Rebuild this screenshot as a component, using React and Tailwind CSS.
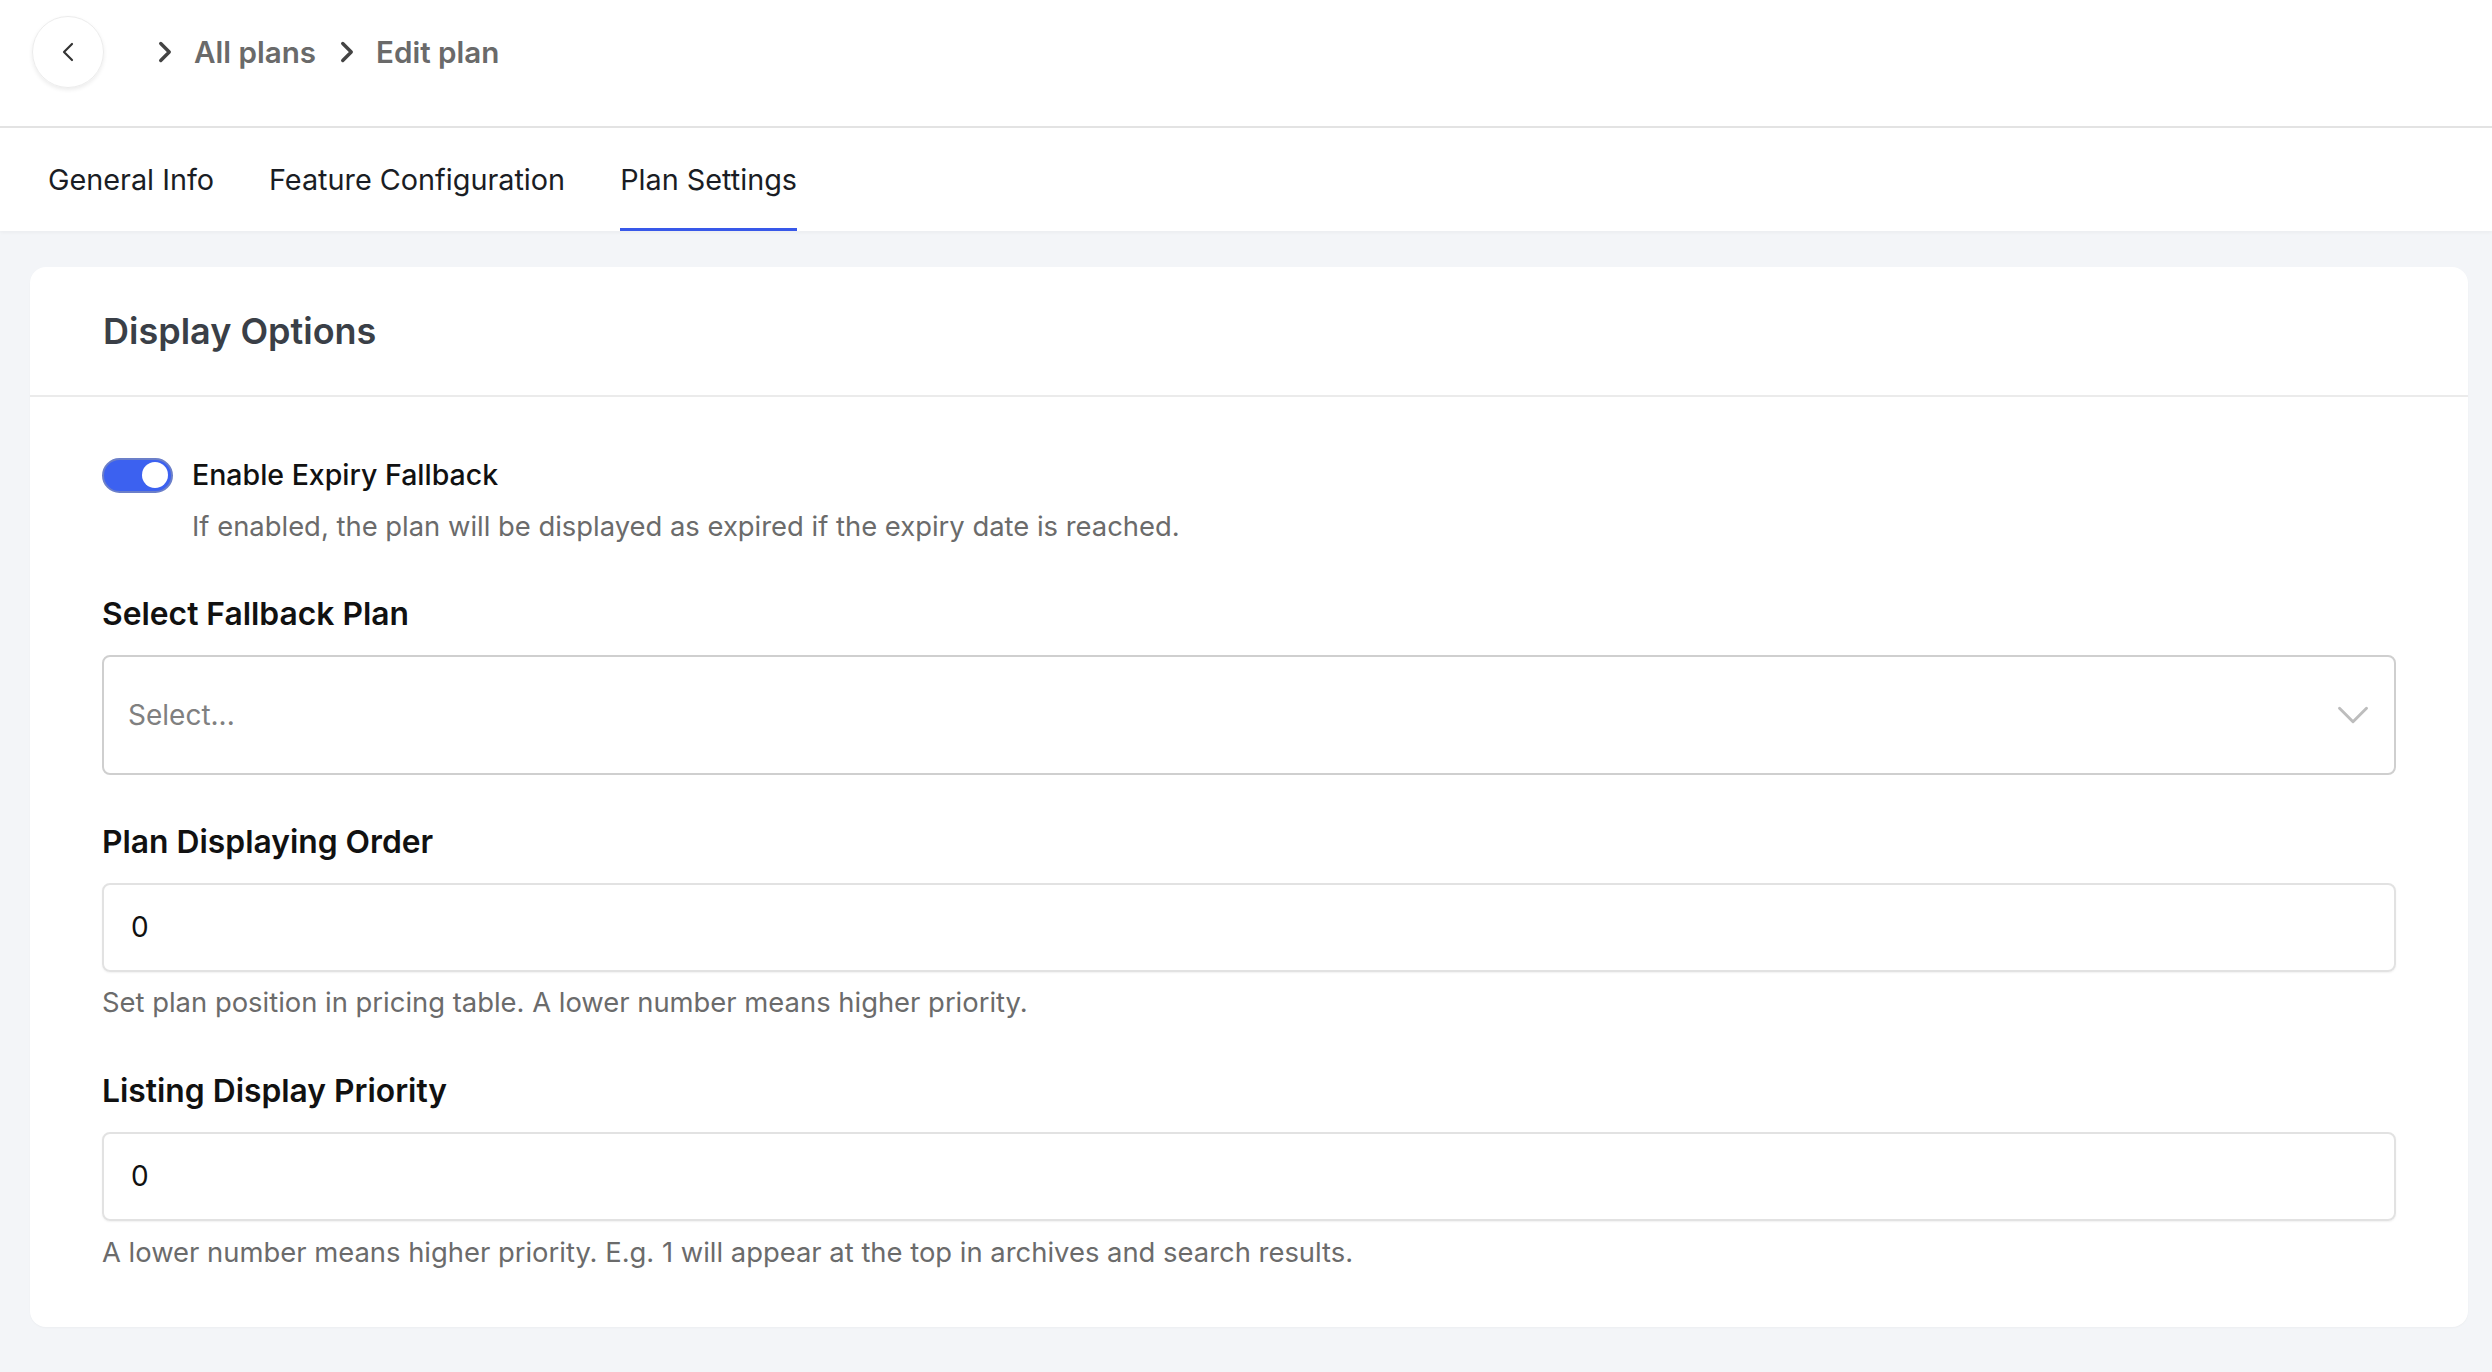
import React, { useState } from "react";
import { ChevronLeft, ChevronRight, ChevronDown } from "lucide-react";

const Toggle = ({ on, onChange }) => (
  <button
    onClick={() => onChange(!on)}
    className={`relative w-[71px] h-[35px] rounded-full border-2 shrink-0 ${
      on ? "bg-[#3c61f0] border-[#6b7fc9]" : "bg-gray-300 border-gray-300"
    }`}
  >
    <span
      className={`absolute top-[2.5px] w-[26px] h-[26px] rounded-full bg-white ${
        on ? "right-[3px]" : "left-[3px]"
      }`}
    />
  </button>
);

const FieldLabel = ({ children, className = "" }) => (
  <div className={`text-[31.8px] leading-[40px] font-semibold text-[#111] ${className}`}>
    {children}
  </div>
);

const Help = ({ children, className = "" }) => (
  <p className={`text-[27.4px] leading-[36px] text-[#6b6b6b] ${className}`}>{children}</p>
);

const NumberInput = ({ value, onChange }) => (
  <input
    type="text"
    value={value}
    onChange={(e) => onChange(e.target.value)}
    className="mt-[21px] w-full h-[89px] rounded-[8px] border-2 border-[#e2e2e2] shadow-[0_1px_2px_rgba(0,0,0,0.06)] px-[27px] text-[28px] text-[#111] outline-none"
  />
);

export default function App() {
  const [expiry, setExpiry] = useState(true);
  const [order, setOrder] = useState("0");
  const [priority, setPriority] = useState("0");
  const tabs = ["General Info", "Feature Configuration", "Plan Settings"];
  const [tab, setTab] = useState("Plan Settings");

  return (
    <div className="min-h-screen bg-[#f3f5f8] font-['Inter',sans-serif]">
      <header className="h-[128px] bg-white border-b-2 border-[#e3e3e3] flex items-start pt-[16px] pl-[32px]">
        <button className="w-[72px] h-[72px] rounded-full border border-[#ececec] shadow-[0_2px_4px_rgba(0,0,0,0.08)] flex items-center justify-center text-[#333]">
          <ChevronLeft size={32} strokeWidth={1.6} />
        </button>
        <nav className="ml-[44px] h-[72px] flex items-center text-[29.6px] font-semibold text-[#6a6a6a]">
          <ChevronRight size={34} strokeWidth={2.4} className="text-[#444]" />
          <span className="ml-[12px]">All plans</span>
          <ChevronRight size={34} strokeWidth={2.4} className="ml-[14px] text-[#444]" />
          <span className="ml-[12px]">Edit plan</span>
        </nav>
      </header>

      <div className="h-[103px] bg-white flex gap-[55px] px-[48px] shadow-[0_2px_3px_rgba(0,0,0,0.03)]">
        {tabs.map((t) => (
          <button
            key={t}
            onClick={() => setTab(t)}
            className={`h-full flex items-center text-[28.8px] text-[#1a1d24] border-b-[3px] pt-[3px] ${
              tab === t ? "border-[#3858e9]" : "border-transparent"
            }`}
          >
            {t}
          </button>
        ))}
      </div>

      <main className="pl-[30px] pr-[24px] pt-[36px] pb-[46px]">
        <section className="bg-white rounded-[16px] shadow-[0_1px_2px_rgba(0,0,0,0.03)]">
          <div className="h-[130px] px-[73px] flex items-center border-b-2 border-[#ebebeb]">
            <h2 className="text-[36px] font-semibold text-[#3a3f47]">Display Options</h2>
          </div>

          <div className="px-[72px] pb-[57px]">
            <div className="mt-[57px] flex items-center gap-[19px]">
              <Toggle on={expiry} onChange={setExpiry} />
              <span className="text-[28.5px] font-medium text-[#111]">Enable Expiry Fallback</span>
            </div>
            <Help className="mt-[11px] pl-[90px]">
              If enabled, the plan will be displayed as expired if the expiry date is reached.
            </Help>

            <FieldLabel className="mt-[50px]">Select Fallback Plan</FieldLabel>
            <div className="mt-[21px] h-[120px] rounded-[8px] border-2 border-[#cfcfcf] flex items-center justify-between pl-[24px] pr-[14px]">
              <span className="text-[28px] text-[#808080]">Select...</span>
              <ChevronDown size={54} strokeWidth={1.3} className="text-[#bdbdbd]" />
            </div>

            <FieldLabel className="mt-[47px]">Plan Displaying Order</FieldLabel>
            <NumberInput value={order} onChange={setOrder} />
            <Help className="mt-[12px]">
              Set plan position in pricing table. A lower number means higher priority.
            </Help>

            <FieldLabel className="mt-[51px]">Listing Display Priority</FieldLabel>
            <NumberInput value={priority} onChange={setPriority} />
            <Help className="mt-[13px]">
              A lower number means higher priority. E.g. 1 will appear at the top in archives and search results.
            </Help>
          </div>
        </section>
      </main>
    </div>
  );
}
